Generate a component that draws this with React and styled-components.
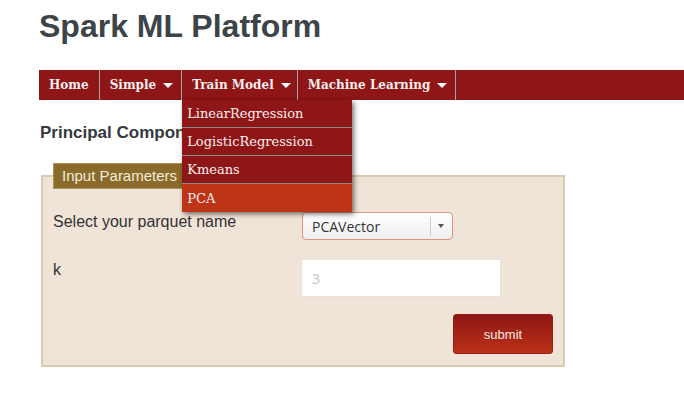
import React from "react";
import styled, { createGlobalStyle } from "styled-components";

const Global = createGlobalStyle`
  html, body { margin: 0; padding: 0; background: #ffffff; }
  body { font-family: "Liberation Sans", Arial, sans-serif; overflow: hidden; }
`;

const Page = styled.div`
  padding-left: 39px;
`;

const Title = styled.h1`
  margin: 8px 0 0 0;
  font-family: "Liberation Sans", Arial, sans-serif;
  font-weight: bold;
  font-size: 32px;
  line-height: 36px;
  color: #3d4447;
`;

const Nav = styled.ul`
  display: flex;
  margin: 26px 0 0 0;
  padding: 0;
  list-style: none;
  height: 30px;
  background: #8e1616;
`;

const NavItem = styled.li`
  position: relative;
  display: flex;
  align-items: center;
  padding: 0 ${(p) => p.$pr ?? 10}px 0 10px;
  border-right: 1px solid #a4a4a4;
  font-family: "DejaVu Serif", serif;
  font-weight: bold;
  font-size: 12px;
  color: #f7eeee;
  white-space: nowrap;
  cursor: pointer;
`;

const Caret = styled.span`
  display: inline-block;
  margin-left: 7px;
  width: 0;
  height: 0;
  border-left: 5px solid transparent;
  border-right: 5px solid transparent;
  border-top: 5px solid #ffffff;
`;

const Menu = styled.ul`
  position: absolute;
  top: 30px;
  left: 0;
  z-index: 10;
  width: 170px;
  margin: 0;
  padding: 0;
  list-style: none;
  box-shadow: 2px 2px 5px rgba(0, 0, 0, 0.55);
`;

const MenuItem = styled.li`
  height: ${(p) => (p.$last ? 28 : 27)}px;
  display: flex;
  align-items: center;
  padding-left: 5px;
  border-bottom: ${(p) => (p.$last ? "none" : "1px solid #8c8c8c")};
  background: ${(p) => (p.$active ? "#bd3416" : "#8e1616")};
  font-family: "DejaVu Serif", serif;
  font-weight: normal;
  font-size: 13px;
  color: #f8f0f0;
`;

const Heading = styled.h3`
  margin: 24px 0 0 1px;
  font-family: "Liberation Sans", Arial, sans-serif;
  font-weight: bold;
  font-size: 17px;
  line-height: 18px;
  color: #343a3d;
`;

const Fieldset = styled.fieldset`
  box-sizing: border-box;
  width: 524px;
  margin: 21px 0 0 2px;
  padding: 23px 10px 11px 10px;
  background: #f0e3d8;
  border: 2px solid #dacab4;
  min-width: 0;
`;

const Legend = styled.legend`
  box-sizing: border-box;
  height: 26px;
  padding: 0 8px;
  background: #8a6b2b;
  border: 1px solid #a8925c;
  font-family: "Liberation Sans", Arial, sans-serif;
  font-size: 15px;
  line-height: 24px;
  color: #f3ecd8;
`;

const FormGrid = styled.div`
  display: grid;
  grid-template-columns: 249px 1fr;
  row-gap: 19px;
  align-items: start;
`;

const Label = styled.div`
  padding-top: ${(p) => p.$top || 0}px;
  font-family: "Liberation Sans", Arial, sans-serif;
  font-size: 16px;
  line-height: 18px;
  color: #333333;
`;

const Select = styled.div`
  box-sizing: border-box;
  width: 151px;
  height: 28px;
  display: flex;
  align-items: center;
  border: 1px solid #d9977c;
  border-radius: 4px;
  background: linear-gradient(#ffffff, #eeeeee);
  font-family: "Open Sans", sans-serif;
  font-size: 14px;
  color: #333333;
`;

const SelectValue = styled.span`
  flex: 1;
  padding-left: 9px;
`;

const SelectArrow = styled.span`
  width: 20px;
  height: 19px;
  display: flex;
  align-items: center;
  justify-content: center;
  border-left: 1px solid #cccccc;
  margin-right: 1px;
  &::after {
    content: "";
    width: 0;
    height: 0;
    border-left: 3px solid transparent;
    border-right: 3px solid transparent;
    border-top: 4px solid #555555;
  }
`;

const Input = styled.input`
  box-sizing: border-box;
  width: 200px;
  height: 38px;
  margin: 0 0 0 -1px;
  padding: 0 10px;
  border: 1px solid #e6e0da;
  background: #ffffff;
  outline: none;
  font-family: "Open Sans", sans-serif;
  font-size: 14px;
  color: #333333;
  &::placeholder { color: #c4c4c4; }
`;

const Actions = styled.div`
  display: flex;
  justify-content: flex-end;
  margin-top: 17px;
`;

const Submit = styled.button`
  box-sizing: border-box;
  width: 100px;
  height: 40px;
  border: 1px solid #9c1e10;
  border-radius: 3px;
  background: linear-gradient(#8e1616, #bb3217);
  font-family: "Liberation Sans", Arial, sans-serif;
  font-size: 13px;
  color: #f4e6e6;
  cursor: pointer;
`;

export default function App() {
  return (
    <>
      <Global />
      <Page>
        <Title>Spark ML Platform</Title>
        <Nav>
          <NavItem>Home</NavItem>
          <NavItem $pr={8}>
            Simple<Caret />
          </NavItem>
          <NavItem $pr={6}>
            Train Model<Caret />
            <Menu>
              <MenuItem>LinearRegression</MenuItem>
              <MenuItem>LogisticRegression</MenuItem>
              <MenuItem>Kmeans</MenuItem>
              <MenuItem $active $last>PCA</MenuItem>
            </Menu>
          </NavItem>
          <NavItem $pr={8}>
            Machine Learning<Caret />
          </NavItem>
        </Nav>
        <Heading>Principal Component Analysis</Heading>
        <Fieldset>
          <Legend>Input Parameters</Legend>
          <FormGrid>
            <Label $top={1}>Select your parquet name</Label>
            <Select>
              <SelectValue>PCAVector</SelectValue>
              <SelectArrow />
            </Select>
            <Label $top={2}>k</Label>
            <Input placeholder="3" />
          </FormGrid>
          <Actions>
            <Submit>submit</Submit>
          </Actions>
        </Fieldset>
      </Page>
    </>
  );
}
